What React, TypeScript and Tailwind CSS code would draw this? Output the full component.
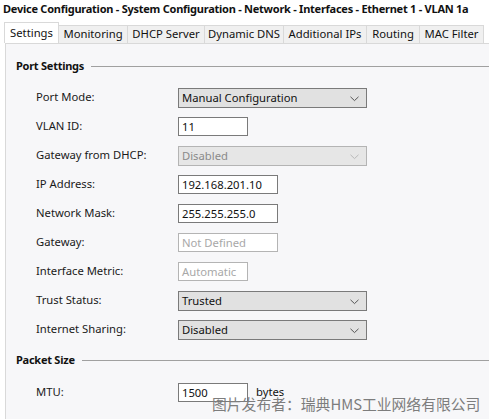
import React from "react";

const font = { fontFamily: '"Noto Sans", "Open Sans", sans-serif' };

function Chevron({ disabled }: { disabled?: boolean }) {
  return (
    <svg width="9" height="6" viewBox="0 0 9 6" className="absolute right-[7px] top-[7px]">
      <path d="M0.5 0.8 L4.5 4.6 L8.5 0.8" fill="none" stroke={disabled ? "#b8b8b8" : "#555"} strokeWidth="1" />
    </svg>
  );
}

function Select({ value, disabled }: { value: string; disabled?: boolean }) {
  return (
    <div
      className={
        "relative shrink-0 w-[189px] h-[20px] border flex items-center pl-[3px] text-[11.25px] leading-none " +
        (disabled ? "bg-[#e6e6e6] border-[#b4b4b4] text-[#8a8a8a]" : "bg-[#e1e1e1] border-[#7a7a7a] text-[#111]")
      }
    >
      {value}
      <Chevron disabled={disabled} />
    </div>
  );
}

function Input({ value, w, placeholder }: { value: string; w: string; placeholder?: boolean }) {
  return (
    <div
      className={
        "shrink-0 h-[19px] bg-white border flex items-center pl-[3px] text-[11.25px] leading-none " +
        w +
        (placeholder ? " border-[#b4b4b4] text-[#a8a8a8]" : " border-[#7a7a7a] text-[#111]")
      }
    >
      {value}
    </div>
  );
}

function Row({ label, children }: { label: string; children: React.ReactNode }) {
  return (
    <div className="h-[29px] flex items-center">
      <div className="shrink-0 w-[172px] pl-[30px] text-[11.25px] text-[#1a1a1a] whitespace-nowrap">{label}</div>
      {children}
    </div>
  );
}

function Header({ title }: { title: string }) {
  return (
    <div className="h-[20px] flex items-center pl-[10px] gap-[7px]">
      <span className="text-[11px] tracking-[-0.25px] font-bold text-[#111] whitespace-nowrap">{title}</span>
      <div className="flex-1 h-px bg-[#a0a0a0]" />
    </div>
  );
}

export default function App() {
  const tabs = ["Monitoring", "DHCP Server", "Dynamic DNS", "Additional IPs", "Routing", "MAC Filter"];
  const widths = ["w-[69px]", "w-[77px]", "w-[79px]", "w-[83px]", "w-[53px]", "w-[64px]"];
  return (
    <div className="relative w-[489px] h-[419px] bg-white overflow-hidden" style={font}>
      <div className="h-[22px] pl-[3px] pt-[1px] text-[11px] tracking-[-0.25px] font-bold text-[#111] whitespace-nowrap">
        Device Configuration - System Configuration - Network - Interfaces - Ethernet 1 - VLAN 1a
      </div>
      <div className="flex items-end h-[21px] pl-[4px]">
        <div className="shrink-0 w-[55px] h-[21px] bg-white border border-b-0 border-[#d9d9d9] flex items-center justify-center text-[11.25px] text-[#111] relative z-10">
          Settings
        </div>
        {tabs.map((t, i) => (
          <div
            key={t}
            className={
              "shrink-0 h-[18px] bg-[#f0f0f0] border border-l-0 border-b-0 border-[#d9d9d9] flex items-center justify-center text-[11.25px] text-[#111] whitespace-nowrap " +
              widths[i]
            }
          >
            {t}
          </div>
        ))}
      </div>
      <div className="ml-[5px] border-l border-t border-[#d9d9d9] bg-[#f7f7f9] h-[376px] pt-[12px]">
        <Header title="Port Settings" />
        <div className="h-[7px]" />
        <Row label="Port Mode:">
          <Select value="Manual Configuration" />
        </Row>
        <Row label="VLAN ID:">
          <Input value="11" w="w-[70px]" />
        </Row>
        <Row label="Gateway from DHCP:">
          <Select value="Disabled" disabled />
        </Row>
        <Row label="IP Address:">
          <Input value="192.168.201.10" w="w-[100px]" />
        </Row>
        <Row label="Network Mask:">
          <Input value="255.255.255.0" w="w-[100px]" />
        </Row>
        <Row label="Gateway:">
          <Input value="Not Defined" w="w-[100px]" placeholder />
        </Row>
        <Row label="Interface Metric:">
          <Input value="Automatic" w="w-[70px]" placeholder />
        </Row>
        <Row label="Trust Status:">
          <Select value="Trusted" />
        </Row>
        <Row label="Internet Sharing:">
          <Select value="Disabled" />
        </Row>
        <div className="h-[6px]" />
        <Header title="Packet Size" />
        <div className="h-[8px]" />
        <Row label="MTU:">
          <Input value="1500" w="w-[70px]" />
          <span className="ml-[8px] text-[11.25px] text-[#111]">bytes</span>
        </Row>
      </div>
      <div
        className="absolute left-[212px] top-[397px] text-[14.8px] leading-none text-[#7d7d7d] whitespace-nowrap"
        style={{ fontFamily: '"Noto Sans CJK SC", "Noto Sans", sans-serif' }}
      >
        图片发布者：瑞典HMS工业网络有限公司
      </div>
    </div>
  );
}
